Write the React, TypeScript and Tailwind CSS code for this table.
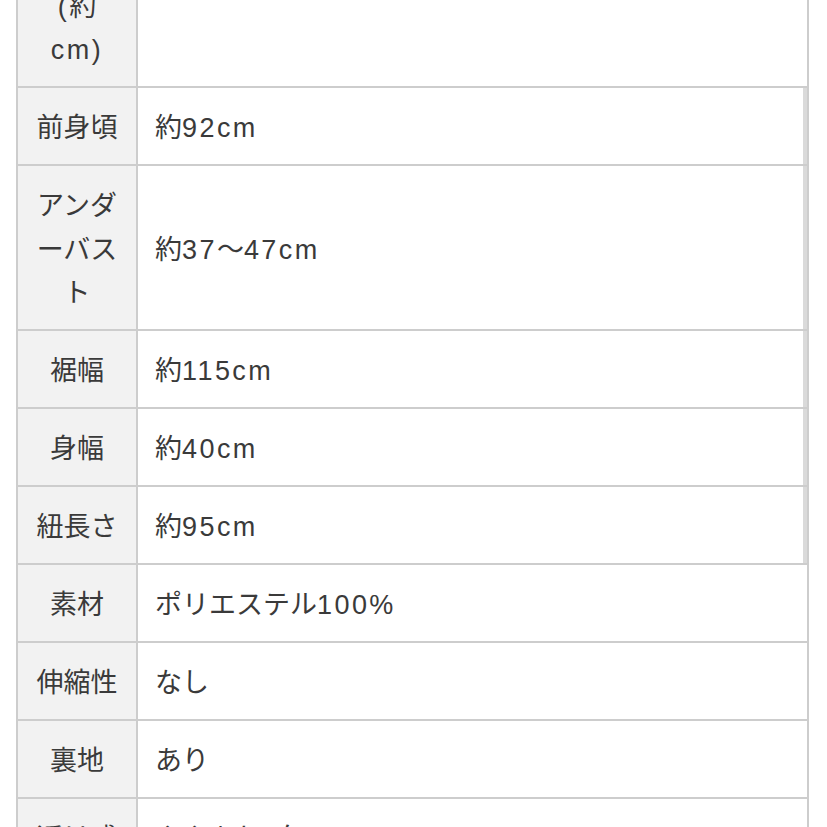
import React from "react";

const FONT = '"Liberation Sans", "Noto Sans CJK JP", sans-serif';

function Txt({ s }: { s: string }) {
  const parts = s.split(/([0-9A-Za-z%().]+)/);
  return (
    <>
      {parts.map((p, i) =>
        /^[0-9A-Za-z%().]+$/.test(p) ? (
          <span key={i} className="tracking-[0.09em]">
            {p}
          </span>
        ) : (
          <React.Fragment key={i}>{p}</React.Fragment>
        )
      )}
    </>
  );
}

type Row = { label: string[]; value: string; inset?: boolean };

const rows: Row[] = [
  { label: ["トップ", "バスト", "(約", "cm)"], value: "" },
  { label: ["前身頃"], value: "約92cm", inset: true },
  { label: ["アンダ", "ーバス", "ト"], value: "約37〜47cm", inset: true },
  { label: ["裾幅"], value: "約115cm", inset: true },
  { label: ["身幅"], value: "約40cm", inset: true },
  { label: ["紐長さ"], value: "約95cm", inset: true },
  { label: ["素材"], value: "ポリエステル100%" },
  { label: ["伸縮性"], value: "なし" },
  { label: ["裏地"], value: "あり" },
  { label: ["透け感"], value: "ややあり(白)" },
];

export default function App() {
  return (
    <div
      className="h-[827px] w-[827px] overflow-hidden bg-white text-[27px] text-[#3a3a3a]"
      style={{ fontFamily: FONT }}
    >
      <div className="ml-[16px] mt-[-120.5px] w-[793px]">
        {rows.map((r, i) => (
          <div
            key={i}
            className="flex border-x-2 border-b-2 border-[#cdcdcd]"
          >
            <div className="flex w-[120px] shrink-0 flex-col items-center justify-center border-r-2 border-[#cdcdcd] bg-[#f2f2f2] pt-[19.25px] pb-[13.25px] text-center leading-[43.5px]">
              {r.label.map((l, j) => (
                <div key={j} className="whitespace-nowrap">
                  <Txt s={l} />
                </div>
              ))}
            </div>
            <div
              className={
                r.inset
                  ? "flex flex-1 items-center border-r-4 border-[#dadada] pt-[19.25px] pb-[13.25px] pl-[17px] leading-[43.5px]"
                  : "flex flex-1 items-center pt-[19.25px] pb-[13.25px] pl-[17px] leading-[43.5px]"
              }
            >
              <Txt s={r.value} />
            </div>
          </div>
        ))}
      </div>
    </div>
  );
}
